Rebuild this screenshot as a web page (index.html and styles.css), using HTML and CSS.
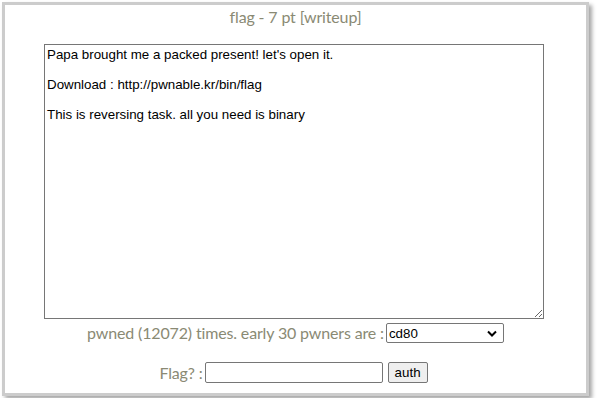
FILE: index.html
```html
<!DOCTYPE html>
<html>
<head>
<title>flag - pwnable.kr</title>
<link rel="stylesheet" href="styles.css">
</head>
<body>
<div class="box">
  <div class="title">flag - 7 pt [writeup]</div>
  <textarea class="desc" readonly>Papa brought me a packed present! let's open it.

Download : http://pwnable.kr/bin/flag

This is reversing task. all you need is binary</textarea>
  <div class="row pwned">pwned (12072) times. early 30 pwners are :
    <select class="pwners">
      <option>cd80</option>
    </select>
  </div>
  <div class="row flag">Flag? :
    <input type="text" class="flagInput">
    <button class="authBtn">auth</button>
  </div>
</div>
</body>
</html>
```

FILE: styles.css
```css
body
{
	margin: 0px;
	background: #ffffff;
	font-family: Lato, "Liberation Sans", sans-serif;
}

.box
{
	margin: 2px;
	width: 581px;
	height: 388px;
	border: 3px solid #cccccc;
	box-shadow: 3px 3px 4px rgba(0,0,0,0.35);
	display: flex;
	flex-direction: column;
	align-items: center;
	color: #8a8a74;
	font-size: 16px;
	letter-spacing: -0.15px;
}

.title
{
	margin-top: 2px;
	line-height: 20px;
}

.desc
{
	margin-top: 17px;
	width: 500px;
	height: 275px;
	box-sizing: border-box;
	padding: 2px;
	border: 1px solid #767676;
	border-radius: 0px;
	font-family: "Liberation Sans", Arial, sans-serif;
	font-size: 13.33px;
	line-height: 15px;
	letter-spacing: 0px;
	color: #000000;
	resize: vertical;
	margin-left: -3px;
}

.row
{
	display: flex;
	align-items: center;
	gap: 2px;
	line-height: 20px;
}

.pwned
{
	margin-top: 4px;
}

.flag
{
	margin-top: 19px;
	margin-left: -4px;
}

.pwners
{
	-webkit-appearance: none;
	appearance: none;
	width: 118px;
	height: 20px;
	padding: 0px 2px;
	font-family: "Liberation Sans", Arial, sans-serif;
	font-size: 13.33px;
	letter-spacing: 0px;
	color: #000000;
	border: 1px solid #767676;
	border-radius: 2px;
	background: #ffffff url("data:image/svg+xml;utf8,<svg xmlns='http://www.w3.org/2000/svg' width='10' height='7' viewBox='0 0 10 7'><path d='M1 1.5 L5 5.5 L9 1.5' fill='none' stroke='black' stroke-width='2'/></svg>") no-repeat right 6px center;
}

.flagInput
{
	width: 178px;
	height: 21px;
	box-sizing: border-box;
	border: 1px solid #767676;
	border-radius: 2px;
	font-size: 13px;
}

.authBtn
{
	height: 21px;
	margin-left: 3px;
	padding: 0px 6px;
	font-family: "Liberation Sans", Arial, sans-serif;
	font-size: 13.33px;
	letter-spacing: 0px;
	color: #000000;
	background: #efefef;
	border: 1px solid #767676;
	border-radius: 2px;
}
```
